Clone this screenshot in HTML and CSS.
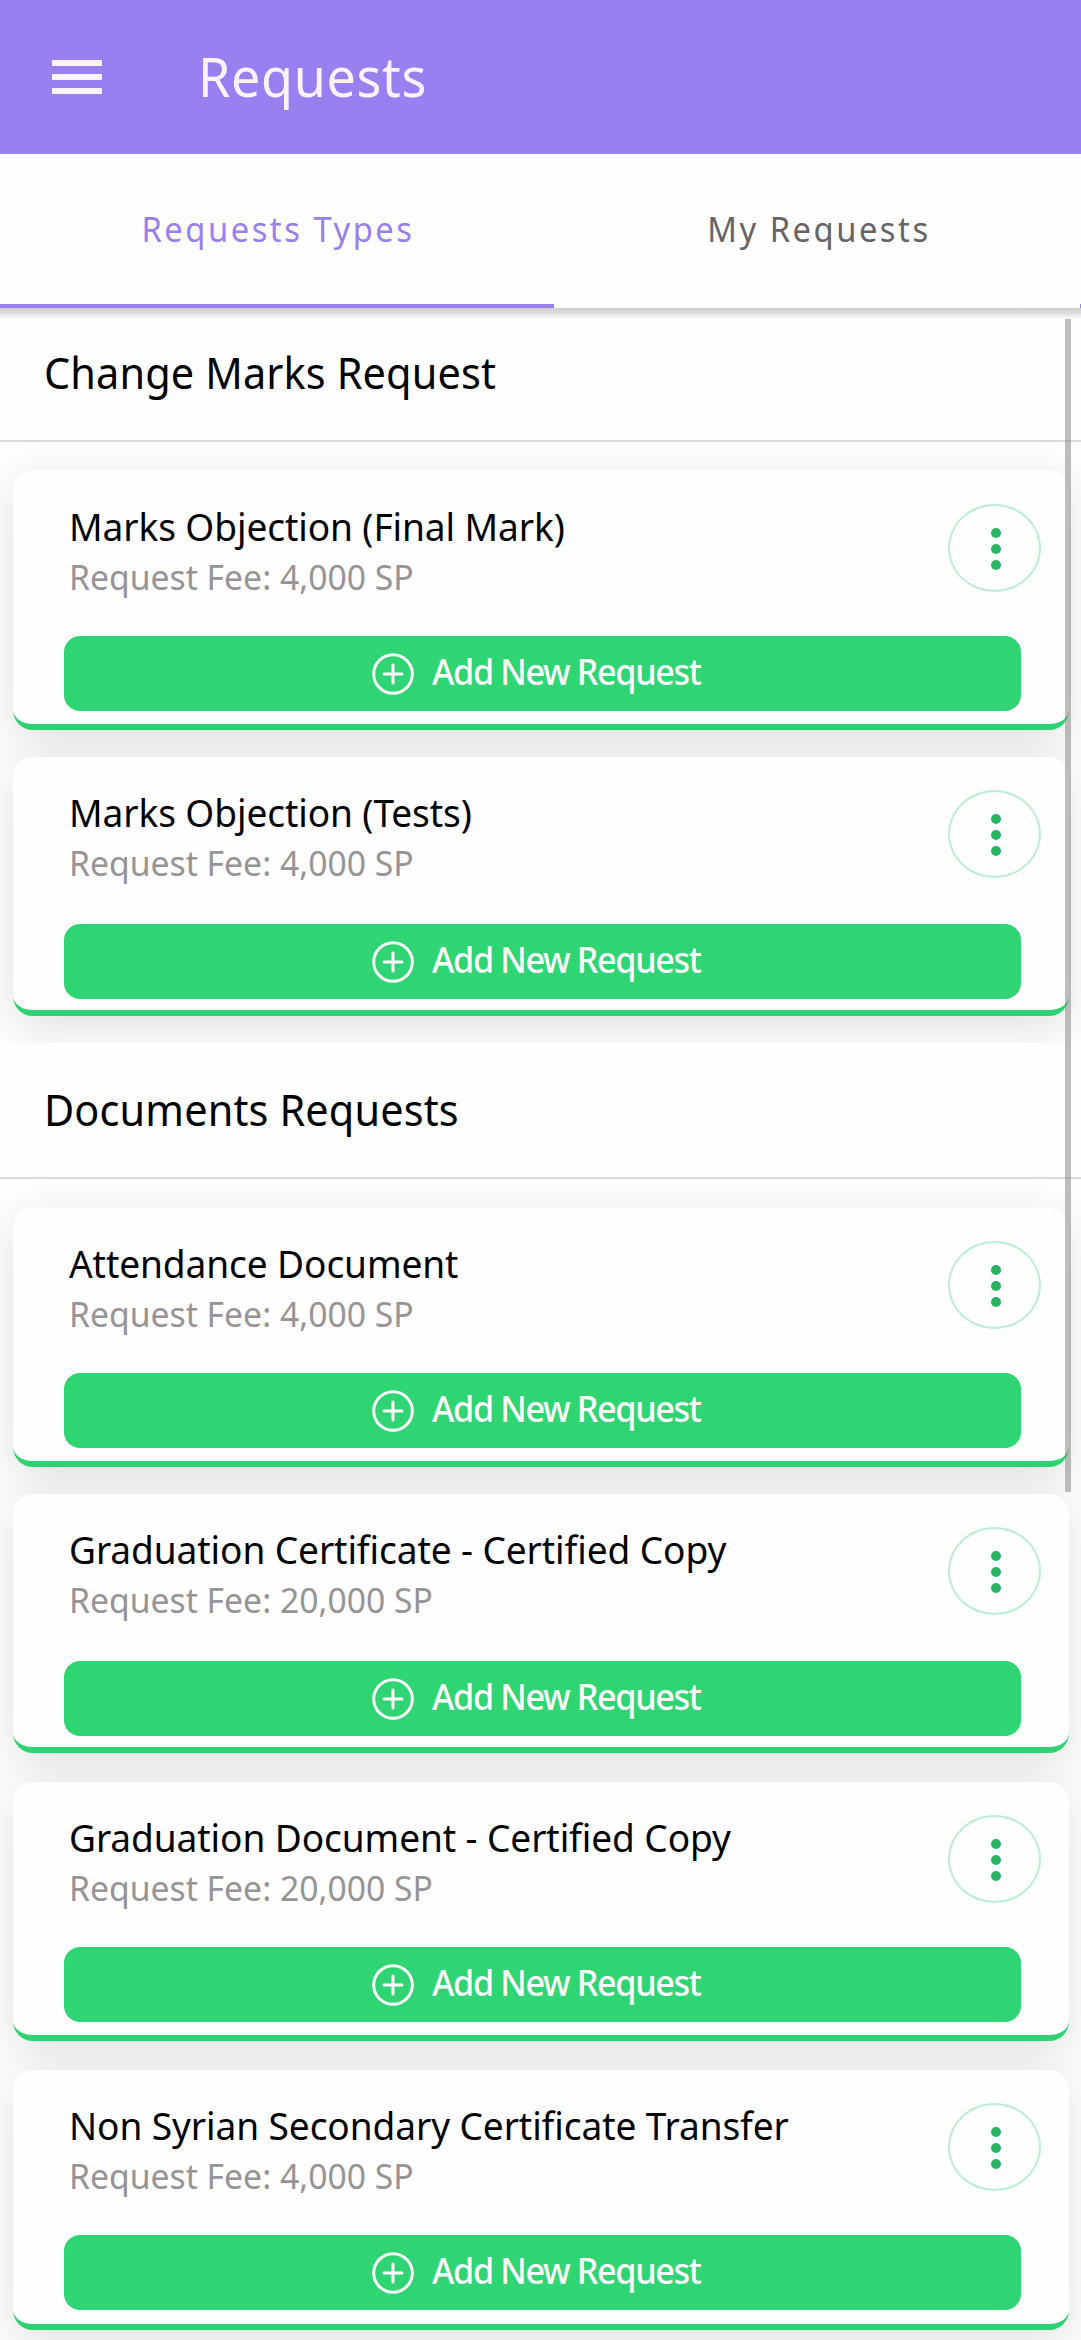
FILE: index.html
```html
<!DOCTYPE html>
<html lang="en">
<head>
<meta charset="utf-8">
<title>Requests</title>
<link rel="stylesheet" href="styles.css">
</head>
<body>
<svg class="sprite" aria-hidden="true">
  <symbol id="plus" viewBox="0 0 42 42"><circle cx="21" cy="21" r="19.3"/><path d="M21 12v18M12 21h18"/></symbol>
  <symbol id="dots" viewBox="0 0 10 42"><circle cx="5" cy="5" r="5"/><circle cx="5" cy="21" r="5"/><circle cx="5" cy="37" r="5"/></symbol>
</svg>
<header class="toolbar">
  <svg class="menu" viewBox="0 0 50 34"><path d="M0 3h50M0 17h50M0 31h50"/></svg>
  <h1 class="title narrow">Requests</h1>
</header>
<nav class="tabs">
  <a class="tab tab-active"><span class="narrow narrow-center">Requests Types</span></a>
  <a class="tab"><span class="narrow narrow-center">My Requests</span></a>
</nav>
<main class="content">
  <section>
    <h2 class="group"><span class="narrow">Change Marks Request</span></h2>
    <article class="card card-first">
      <div class="info"><div><h3 class="name narrow">Marks Objection (Final Mark)</h3><p class="fee narrow">Request Fee: 4,000 SP</p></div><span class="more"><svg class="dots"><use href="#dots"/></svg></span></div>
      <button class="add"><svg class="plus"><use href="#plus"/></svg><span class="narrow">Add New Request</span></button>
    </article>
    <article class="card card-low">
      <div class="info"><div><h3 class="name narrow">Marks Objection (Tests)</h3><p class="fee narrow">Request Fee: 4,000 SP</p></div><span class="more"><svg class="dots"><use href="#dots"/></svg></span></div>
      <button class="add"><svg class="plus"><use href="#plus"/></svg><span class="narrow">Add New Request</span></button>
    </article>
  </section>
  <section>
    <h2 class="group"><span class="narrow">Documents Requests</span></h2>
    <article class="card card-short">
      <div class="info"><div><h3 class="name narrow">Attendance Document</h3><p class="fee narrow">Request Fee: 4,000 SP</p></div><span class="more"><svg class="dots"><use href="#dots"/></svg></span></div>
      <button class="add"><svg class="plus"><use href="#plus"/></svg><span class="narrow">Add New Request</span></button>
    </article>
    <article class="card card-low card-spaced">
      <div class="info"><div><h3 class="name narrow">Graduation Certificate - Certified Copy</h3><p class="fee narrow">Request Fee: 20,000 SP</p></div><span class="more"><svg class="dots"><use href="#dots"/></svg></span></div>
      <button class="add"><svg class="plus"><use href="#plus"/></svg><span class="narrow">Add New Request</span></button>
    </article>
    <article class="card card-short card-spaced">
      <div class="info"><div><h3 class="name narrow">Graduation Document - Certified Copy</h3><p class="fee narrow">Request Fee: 20,000 SP</p></div><span class="more"><svg class="dots"><use href="#dots"/></svg></span></div>
      <button class="add"><svg class="plus"><use href="#plus"/></svg><span class="narrow">Add New Request</span></button>
    </article>
    <article class="card">
      <div class="info"><div><h3 class="name narrow">Non Syrian Secondary Certificate Transfer</h3><p class="fee narrow">Request Fee: 4,000 SP</p></div><span class="more"><svg class="dots"><use href="#dots"/></svg></span></div>
      <button class="add"><svg class="plus"><use href="#plus"/></svg><span class="narrow">Add New Request</span></button>
    </article>
  </section>
</main>
<div class="scrollbar"></div>
</body>
</html>
```
FILE: styles.css
```css
* { box-sizing: border-box; margin: 0; padding: 0; }
body {
  width: 1081px;
  height: 2340px;
  overflow: hidden;
  position: relative;
  background: #fefefe;
  font-family: "Noto Sans", "Open Sans", sans-serif;
  color: #000;
}
.sprite { position: absolute; width: 0; height: 0; }

/* slightly condensed lettering */
.narrow { display: block; transform: scaleX(0.963); transform-origin: left; white-space: nowrap; }
.narrow-center { transform-origin: center; }

.toolbar {
  height: 154px;
  display: flex;
  align-items: center;
  padding-left: 52px;
  background: #9980f0;
  color: #f8f3fd;
}
.menu { width: 50px; height: 34px; stroke: #f8f3fd; stroke-width: 6; }
.title {
  margin: -2px 0 0 96px;
  font-size: 54px;
  line-height: 74px;
  font-weight: 400;
  letter-spacing: 0.7px;
}

.tabs {
  position: relative;
  z-index: 1;
  height: 154px;
  display: flex;
  background: #fefefe;
}
.tabs::after {
  content: "";
  position: absolute;
  top: 154px;
  left: 0;
  right: 0;
  height: 11px;
  background: linear-gradient(#cfcdcf, #dcdbdc 40%, #fafafa);
}
.tab {
  width: 526px;
  border-bottom: 4.5px solid transparent;
  text-align: center;
  font-size: 34px;
  line-height: 150px;
  letter-spacing: 2.6px;
  text-indent: 4px;
  color: #666466;
}
.tab-active { width: 554px; border-color: #9980ec; color: #9980ec; text-indent: 2px; }
.tabs { border-right: 0; }
.tabs::before {
  content: "";
  position: absolute;
  right: 0;
  bottom: 0;
  width: 1px;
  height: 4px;
  background: #9980ec;
}

.content { padding-top: 1px; }
.group {
  height: 133px;
  padding: 31px 0 0 44px;
  border-bottom: 2px solid #dbd9db;
  background: #fefefe;
  font-size: 43px;
  line-height: 66px;
  font-weight: 400;
  letter-spacing: 0.15px;
}
section + section .group { height: 136px; padding-top: 34px; }

.card {
  width: 1056px;
  height: 260px;
  margin: 0 0 27px 13px;
  border-bottom: 6px solid #2fd272;
  border-radius: 20px;
  background: #fefefe;
  box-shadow: 0 12px 48px rgba(0, 0, 0, 0.12);
}
.group + .card { margin-top: 29px; }
.group + .card-first { margin-top: 28px; }
.card-low, .card-short { height: 259px; }
.card-spaced { margin-bottom: 29px; }
.info {
  height: 165px;
  display: flex;
  justify-content: space-between;
  align-items: flex-start;
  padding: 33px 28px 0 55.5px;
}
.card-first .info { height: 166px; padding-top: 34px; }
.card-low .info { height: 167px; }
.name { margin: -2px 0 2px; font-size: 38.5px; line-height: 48px; font-weight: 400; letter-spacing: -0.1px; }
.fee { font-size: 35px; line-height: 49px; color: #969496; }
.more {
  width: 93px;
  height: 88px;
  flex: none;
  display: flex;
  align-items: center;
  justify-content: center;
  border: 2px solid #bceed3;
  border-radius: 50%;
}
.dots { width: 10px; height: 42px; margin: 2px 0 0 2px; fill: #28b463; }
.add {
  width: 957px;
  height: 75px;
  margin-left: 51px;
  display: flex;
  align-items: center;
  gap: 18.5px;
  border: 0;
  border-radius: 16px;
  background: #2fd473;
  color: #fdfffd;
  font: 500 35.5px/48px "Noto Sans", "Open Sans", sans-serif;
  letter-spacing: -1.4px;
  padding: 0 0 6px 307.5px;
}
.plus { width: 42px; height: 42px; margin-top: 7px; fill: none; stroke: #fdfffd; stroke-width: 3; stroke-linecap: round; }

.scrollbar {
  position: absolute;
  left: 1065px;
  top: 319px;
  width: 6px;
  height: 1173px;
  background: rgba(118, 116, 118, 0.46);
}
```
